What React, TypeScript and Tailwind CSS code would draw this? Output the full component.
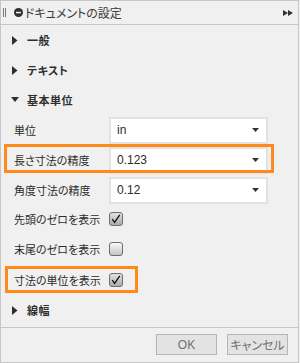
import React from "react";

const jp = "font-['Meiryo_UI','Noto_Sans_CJK_JP',sans-serif]";

const Caret = ({ open }: { open: boolean }) =>
  open ? (
    <svg width="8" height="6" viewBox="0 0 8 6" className="mr-[8px]">
      <path d="M0 0 L8 0 L4 5 Z" fill="#2e2e2e" />
    </svg>
  ) : (
    <svg width="6" height="9" viewBox="0 0 6 9" className="mr-[9px] ml-[1px]">
      <path d="M0 0 L5.5 4.5 L0 9 Z" fill="#2e2e2e" />
    </svg>
  );

const Section = ({ title, open = false }: { title: string; open?: boolean }) => (
  <div className="flex h-[30px] items-center pl-[10px]">
    <Caret open={open} />
    <span className="text-[11px] font-bold tracking-[0.5px] text-[#2e2e2e] [font-feature-settings:'palt']">
      {title}
    </span>
  </div>
);

const Highlight = ({ className }: { className: string }) => (
  <div className={`pointer-events-none absolute border-[3px] border-[#ff8a1c] ${className}`} />
);

const Select = ({ value }: { value: string }) => (
  <div className="flex h-[27px] w-[159px] items-center justify-between border-2 border-[#e2e2e2] bg-white pl-[6px] pr-[7px]">
    <span className="font-['Liberation_Sans',Arial,sans-serif] text-[12px] text-[#2b2b2b]">{value}</span>
    <svg width="7" height="4" viewBox="0 0 7 4">
      <path d="M0 0 L7 0 L3.5 4 Z" fill="#333" />
    </svg>
  </div>
);

const Box = ({ checked }: { checked: boolean }) => (
  <svg width="14" height="14" viewBox="0 0 14 14">
    <defs>
      <linearGradient id={checked ? "cbOn" : "cbOff"} x1="0" y1="0" x2="0" y2="1">
        <stop offset="0" stopColor={checked ? "#e4e4e4" : "#fafafa"} />
        <stop offset="1" stopColor={checked ? "#a9a9a9" : "#c2c2c2"} />
      </linearGradient>
    </defs>
    <rect x="0.5" y="0.5" width="13" height="13" rx="2.5" fill={`url(#${checked ? "cbOn" : "cbOff"})`} stroke="#6f6f6f" />
    {checked && <path d="M3.2 7.2 L5.6 10.4 L10.8 2.8" fill="none" stroke="#111" strokeWidth="1.3" />}
  </svg>
);

const Row = ({ label, children, h = "h-[30px]" }: { label: string; children: React.ReactNode; h?: string }) => (
  <div className={`flex ${h} items-center pl-[13px]`}>
    <span className="w-[95px] text-[11px] text-[#2b2b2b] [font-feature-settings:'palt']">{label}</span>
    {children}
  </div>
);

export default function App() {
  return (
    <div className={`relative h-[363px] w-[300px] bg-[#f0f0f0] ${jp}`}>
      <div className="flex h-full w-[299px] flex-col border border-[#c6c6c6]">
        <div className="flex h-[24px] shrink-0 items-center border-b border-[#c6c6c6] pl-[2px] pr-[4px]">
          <div className="flex h-[9px] gap-[1px]">
            <div className="w-px bg-[#7a7a7a]" />
            <div className="w-px bg-[#7a7a7a]" />
          </div>
          <svg width="9" height="9" viewBox="0 0 9 9" className="ml-[8px] mr-[2px]">
            <circle cx="4.5" cy="4.5" r="4.5" fill="#2f2f2f" />
            <rect x="2" y="3.8" width="5" height="1.5" fill="#f0f0f0" />
          </svg>
          <span className="text-[12px] text-[#3a3a3a] [font-feature-settings:'palt']">ドキュメントの設定</span>
          <svg width="10" height="6" viewBox="0 0 10 6" className="ml-auto mr-[1px]">
            <path d="M0 0 L5 3 L0 6 Z M5 0 L10 3 L5 6 Z" fill="#333" />
          </svg>
        </div>

        <div className="flex-1">
          <Section title="一般" />
          <Section title="テキスト" />
          <Section title="基本単位" open />
          <Row label="単位">
            <Select value="in" />
          </Row>
          <div className="relative">
            <Row label="長さ寸法の精度">
              <Select value="0.123" />
            </Row>
            <Highlight className="left-[3px] top-[-1px] h-[29px] w-[270px]" />
          </div>
          <Row label="角度寸法の精度">
            <Select value="0.12" />
          </Row>
          <Row label="先頭のゼロを表示" h="h-[28px]">
            <Box checked />
          </Row>
          <Row label="末尾のゼロを表示" h="h-[32px]">
            <Box checked={false} />
          </Row>
          <div className="relative">
            <Row label="寸法の単位を表示">
              <Box checked />
            </Row>
            <Highlight className="left-[4px] top-[1px] h-[27px] w-[133px]" />
          </div>
          <Section title="線幅" />
        </div>

        <div className="flex h-[35px] shrink-0 justify-end gap-[10px] border-t border-[#c6c6c6] pr-[10px] pt-[6px]">
          <button className="h-[21px] w-[61px] border border-[#b5b5b5] bg-[#e3e3e3] font-['Liberation_Sans',Arial,sans-serif] text-[12px] text-[#707070]">
            OK
          </button>
          <button className="h-[21px] w-[61px] border border-[#b5b5b5] bg-[#e3e3e3] text-[12px] text-[#707070] [font-feature-settings:'palt']">
            キャンセル
          </button>
        </div>
      </div>
    </div>
  );
}
